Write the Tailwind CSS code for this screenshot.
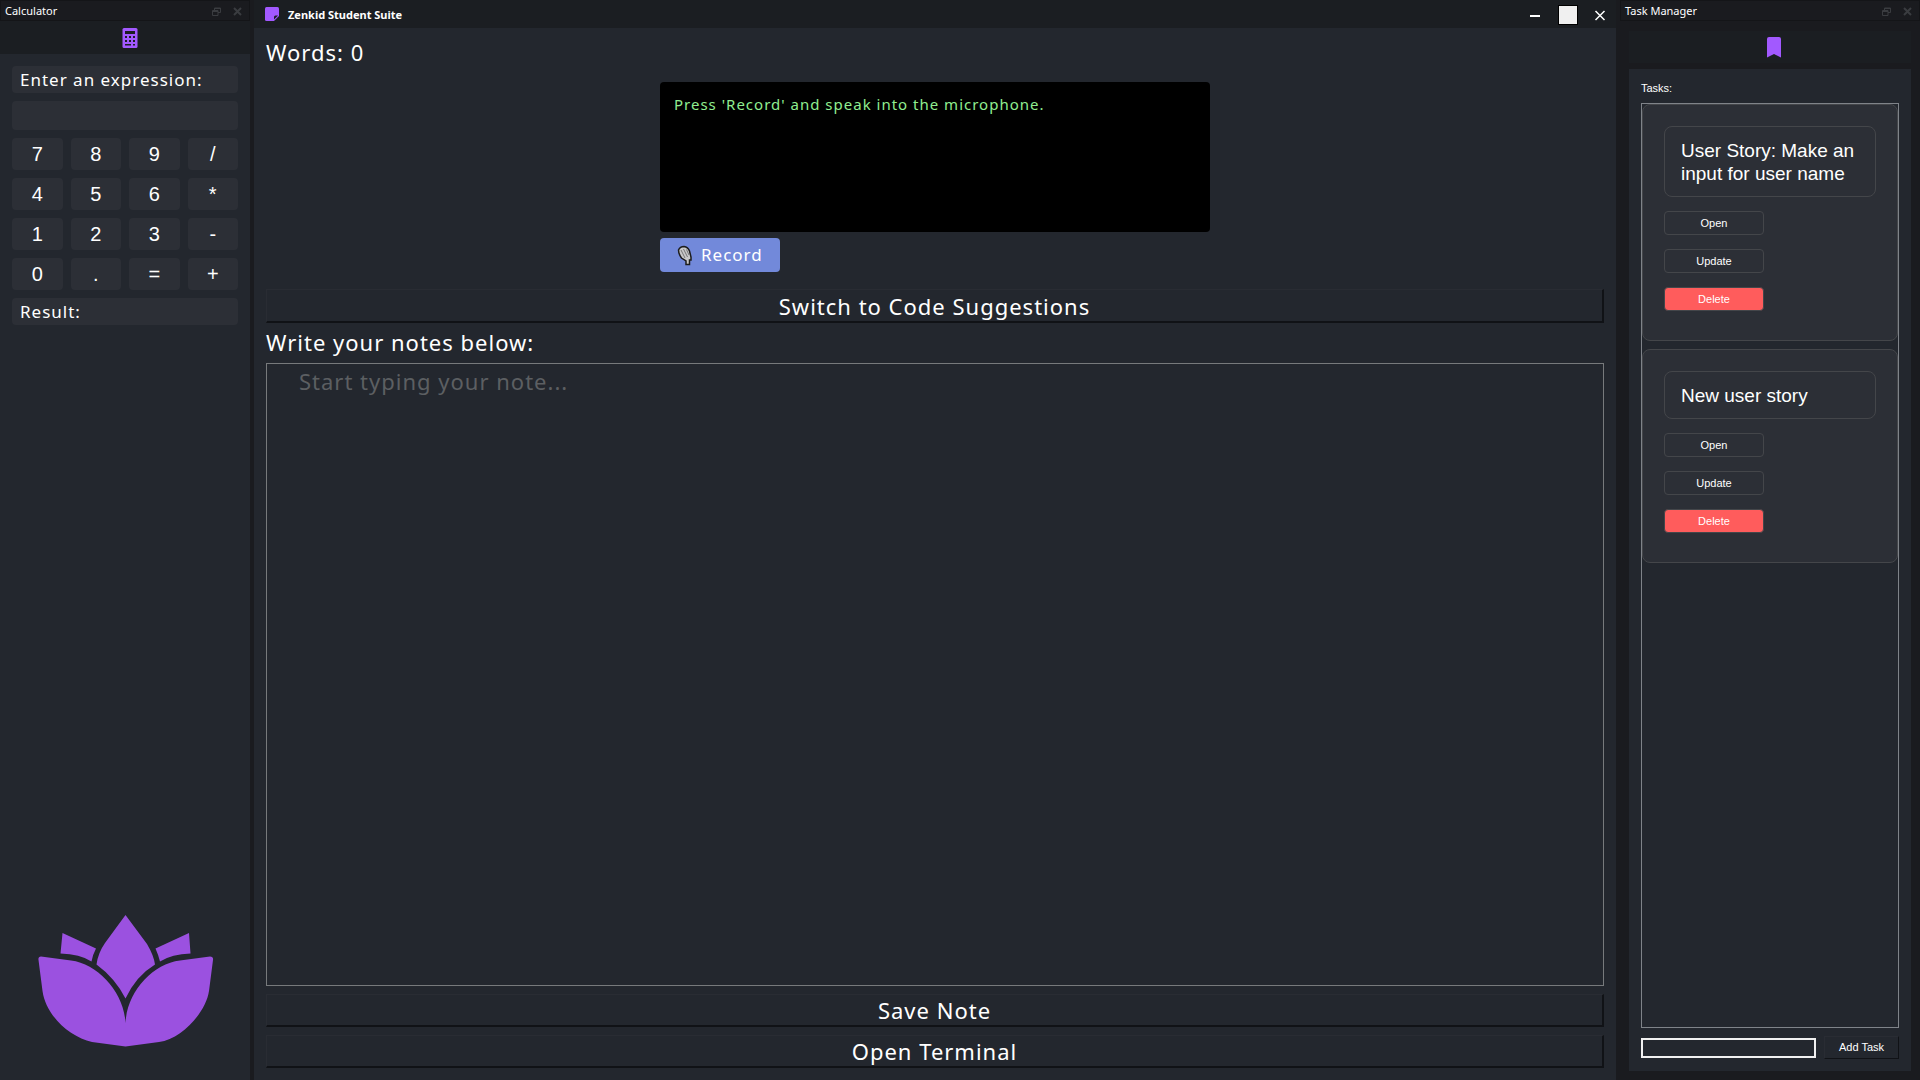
<!DOCTYPE html>
<html lang="en">
<head>
<meta charset="utf-8">
<title>Zenkid Student Suite</title>
<script src="https://cdn.jsdelivr.net/npm/@tailwindcss/browser@4"></script>
</head>
<body class="flex min-h-screen bg-[#1a1b1f] font-['Liberation_Sans',Arial,sans-serif] text-white">

<!-- Calculator dock -->
<aside class="flex w-[250px] shrink-0 flex-col bg-[#23272e]">
  <div class="flex h-[21px] items-center border border-[#141518] bg-[#1a1b1f] pt-0.5 pr-[7px] pl-1 font-['Noto_Sans',sans-serif] text-[11px] text-white">
    <h2 class="grow">Calculator</h2>
    <button aria-label="Float" class="mr-3 text-[#3a3c40]"><svg width="9" height="9" viewBox="0 0 9 9" fill="none" stroke="currentColor"><path d="M2.500 3V1H8.500V5.500H6M.5 3.500H6V8.500H.5Z"/><path d="M3 1.500H8M1 4.500H6"/></svg></button>
    <button aria-label="Close" class="text-[#3a3c40]"><svg width="9" height="9" viewBox="0 0 9 9" fill="none" stroke="currentColor" stroke-width="2"><path d="M1 1 8 8M8 1 1 8"/></svg></button>
  </div>
  <div class="flex h-[33px] items-center justify-center bg-[#1b1e22] pl-[9px]">
    <svg width="16" height="22" viewBox="0 0 16 22"><path fill="#a259ff" d="M2 1H14Q15.500 1 15.500 2.500V19.500Q15.500 21 14 21H2Q.5 21 .5 19.500V2.500Q.5 1 2 1Z"/><path fill="#1b1e22" d="M3 4h10v3H3zM3 9h2v2H3zM7 9h2v2H7zM11 9h2v2h-2zM3 13h2v2H3zM7 13h2v2H7zM11 13h2v2h-2zM3 17h6v1.500H3zM11 17h2v1.500h-2z"/></svg>
  </div>
  <div class="flex flex-col gap-2 px-3 pt-3 font-['Noto_Sans',sans-serif] text-[17px] tracking-[1px]">
    <label for="expr" class="flex h-[27px] items-center rounded-sm bg-[#2c2f36] px-2">Enter an expression:</label>
    <input id="expr" class="h-[29px] rounded-sm bg-[#2c2f36] px-2 outline-none">
    <div class="grid grid-cols-4 gap-2 font-['Liberation_Sans',sans-serif] text-xl leading-8 tracking-normal">
      <button class="h-8 rounded-sm bg-[#2c2f36]">7</button><button class="h-8 rounded-sm bg-[#2c2f36]">8</button><button class="h-8 rounded-sm bg-[#2c2f36]">9</button><button class="h-8 rounded-sm bg-[#2c2f36]">/</button>
      <button class="h-8 rounded-sm bg-[#2c2f36]">4</button><button class="h-8 rounded-sm bg-[#2c2f36]">5</button><button class="h-8 rounded-sm bg-[#2c2f36]">6</button><button class="h-8 rounded-sm bg-[#2c2f36]">*</button>
      <button class="h-8 rounded-sm bg-[#2c2f36]">1</button><button class="h-8 rounded-sm bg-[#2c2f36]">2</button><button class="h-8 rounded-sm bg-[#2c2f36]">3</button><button class="h-8 rounded-sm bg-[#2c2f36]">-</button>
      <button class="h-8 rounded-sm bg-[#2c2f36]">0</button><button class="h-8 rounded-sm bg-[#2c2f36]">.</button><button class="h-8 rounded-sm bg-[#2c2f36]">=</button><button class="h-8 rounded-sm bg-[#2c2f36]">+</button>
    </div>
    <output class="flex h-[27px] items-center rounded-sm bg-[#2c2f36] px-2">Result:</output>
  </div>
  <div class="mt-auto flex justify-center pb-8 pl-0.5">
    <svg width="176" height="134" viewBox="0 0 176 134" fill="#9b51e0" role="img" aria-label="Lotus">
      <path d="M87.500 1 L109 30Q116 42 117 50.500Q98 62 87.500 84.500Q77 64 58.500 50.500Q60 39 67 29Z"/>
      <path d="M24.500 19 58 34.500Q55 40 53.500 47.500Q42 40 22.500 39.500Z"/>
      <path d="M151 19 117.500 34.500Q120 40 122 47.500Q134 40 152.500 39.500Z"/>
      <path d="M3 42.500 33 46.500C60 50 86 78 87.500 109C89 78 114 50 142 46.500L172 42.500Q175.500 42.500 175 46L171 77C168 98 144 125 121 128L87.500 132.500 54 128C32 123 8 102 4.500 77L.5 46Q0 42.500 3 42.500Z"/>
    </svg>
  </div>
</aside>

<!-- Notes editor -->
<main class="ml-1 flex min-w-0 grow flex-col bg-[#23272e] font-['Noto_Sans',sans-serif]">
  <header class="flex h-7 items-center bg-[#1b1e22] pt-0.5 pr-2.5 pl-[11px]">
    <svg class="mb-0.5" width="14" height="14" viewBox="0 0 14 14"><path fill="#a259ff" d="M1.500 0H12.500Q14 0 14 1.500V9L9 14H1.500Q0 14 0 12.500V1.500Q0 0 1.500 0Z"/><path fill="#1b1e22" d="M9 12.500V10Q9 8.500 10.500 8.500H13Z"/></svg>
    <h1 class="ml-[9px] grow text-[11px] font-bold">Zenkid Student Suite</h1>
    <button aria-label="Minimize" class="mr-[17px]"><svg width="12" height="20" viewBox="0 0 12 20"><path fill="#fff" d="M1 10h10v2H1z"/></svg></button>
    <button aria-label="Maximize" class="mr-4 h-5 w-5 border border-black bg-[#f0f0f0]"></button>
    <button aria-label="Close"><svg width="12" height="20" viewBox="0 0 12 20"><path stroke="#fff" stroke-width="1.500" d="M1.500 6 10.500 15M10.500 6 1.500 15"/></svg></button>
  </header>
  <div class="flex grow flex-col px-3 pt-[9px] pb-3 text-[22px] leading-[30px] tracking-[1px]">
    <p>Words: 0</p>
    <section class="mx-auto mt-[15px] w-[550px]">
      <output class="block h-[150px] rounded-sm bg-black px-3.5 py-3 text-[15px] leading-5 text-[#90ee90]">Press 'Record' and speak into the microphone.</output>
      <button class="mt-1.5 flex h-[34px] w-[120px] items-center rounded-sm bg-[#7289da] pl-[17px] text-[17px]">
        <svg class="mr-2" width="16" height="21" viewBox="0 0 16 21"><path fill="#c8c8c8" stroke="#1c1c1c" stroke-width="1.500" d="M1.500 5Q3 1.500 7 1.500Q11 2 12.500 6L14 12V15H12.500V19.500H9V16L4.500 13Q1.500 9 1.500 5Z"/><path fill="none" stroke="#777" d="M4 5 8 13M6.500 4 10.500 12M9.500 4.500 12 10"/></svg>
        Record
      </button>
    </section>
    <button class="mt-[17px] h-[34px] border border-r-2 border-b-2 border-t-[#292c33] border-r-[#101216] border-b-[#101216] border-l-[#292c33]">Switch to Code Suggestions</button>
    <label for="note" class="mt-1">Write your notes below:</label>
    <textarea id="note" placeholder="Start typing your note..." class="mt-1.5 min-h-40 grow resize-none border border-[#777a7c] px-8 py-0.5 outline-none placeholder:text-[#5c5f62]"></textarea>
    <button class="mt-2 h-[33px] border border-r-2 border-b-2 border-t-[#292c33] border-r-[#101216] border-b-[#101216] border-l-[#292c33]">Save Note</button>
    <button class="mt-2 h-[33px] border border-r-2 border-b-2 border-t-[#292c33] border-r-[#101216] border-b-[#101216] border-l-[#292c33]">Open Terminal</button>
  </div>
</main>

<!-- Task dock -->
<aside class="ml-1 flex w-[300px] shrink-0 flex-col bg-[#1a1b1f] text-[11px]">
  <div class="flex h-[21px] items-center border border-[#141518] pt-0.5 pr-[7px] pl-1 font-['Noto_Sans',sans-serif] text-[11px]">
    <h2 class="grow">Task Manager</h2>
    <button aria-label="Float" class="mr-3 text-[#3a3c40]"><svg width="9" height="9" viewBox="0 0 9 9" fill="none" stroke="currentColor"><path d="M2.500 3V1H8.500V5.500H6M.5 3.500H6V8.500H.5Z"/><path d="M3 1.500H8M1 4.500H6"/></svg></button>
    <button aria-label="Close" class="text-[#3a3c40]"><svg width="9" height="9" viewBox="0 0 9 9" fill="none" stroke="currentColor" stroke-width="2"><path d="M1 1 8 8M8 1 1 8"/></svg></button>
  </div>
  <div class="mx-[9px] mt-2.5 flex h-8 items-center justify-center bg-[#1b1e22] pl-2">
    <svg width="14" height="22" viewBox="0 0 14 22"><path fill="#a259ff" d="M2 1H12Q14 1 14 3V21.500L7 18 0 21.500V3Q0 1 2 1Z"/></svg>
  </div>
  <section class="mx-[9px] mt-1.5 mb-[9px] flex grow flex-col bg-[#23272e] px-3 pt-[11px] pb-3">
    <h3 class="mb-[7px] leading-4">Tasks:</h3>
    <ul class="flex grow flex-col gap-2 border border-[#7f8389]">
      <li class="flex flex-col items-start gap-3.5 rounded-lg border border-[#44464a] bg-[#2c2f36] px-[21px] pt-[21px] pb-[29px]">
        <p class="w-full rounded-lg border border-[#44464a] px-4 pt-3 pb-[11px] text-[19px] leading-[23px]">User Story: Make an input for user name</p>
        <button class="h-6 w-[100px] rounded-sm border border-[#44464a]">Open</button>
        <button class="h-6 w-[100px] rounded-sm border border-[#44464a]">Update</button>
        <button class="h-6 w-[100px] rounded-sm border border-[#44464a] bg-[#ff5c5c]">Delete</button>
      </li>
      <li class="flex flex-col items-start gap-3.5 rounded-lg border border-[#44464a] bg-[#2c2f36] px-[21px] pt-[21px] pb-[29px]">
        <p class="w-full rounded-lg border border-[#44464a] px-4 pt-3 pb-[11px] text-[19px] leading-[23px]">New user story</p>
        <button class="h-6 w-[100px] rounded-sm border border-[#44464a]">Open</button>
        <button class="h-6 w-[100px] rounded-sm border border-[#44464a]">Update</button>
        <button class="h-6 w-[100px] rounded-sm border border-[#44464a] bg-[#ff5c5c]">Delete</button>
      </li>
    </ul>
    <form class="mt-2 flex items-center gap-2">
      <input aria-label="New task" class="h-5 min-w-0 grow border-2 border-[#f0f0f0] px-1 outline-none">
      <button type="button" class="h-[23px] w-[75px] border border-t-[#292c33] border-r-[#101216] border-b-[#101216] border-l-[#292c33]">Add Task</button>
    </form>
  </section>
</aside>
</body>
</html>
